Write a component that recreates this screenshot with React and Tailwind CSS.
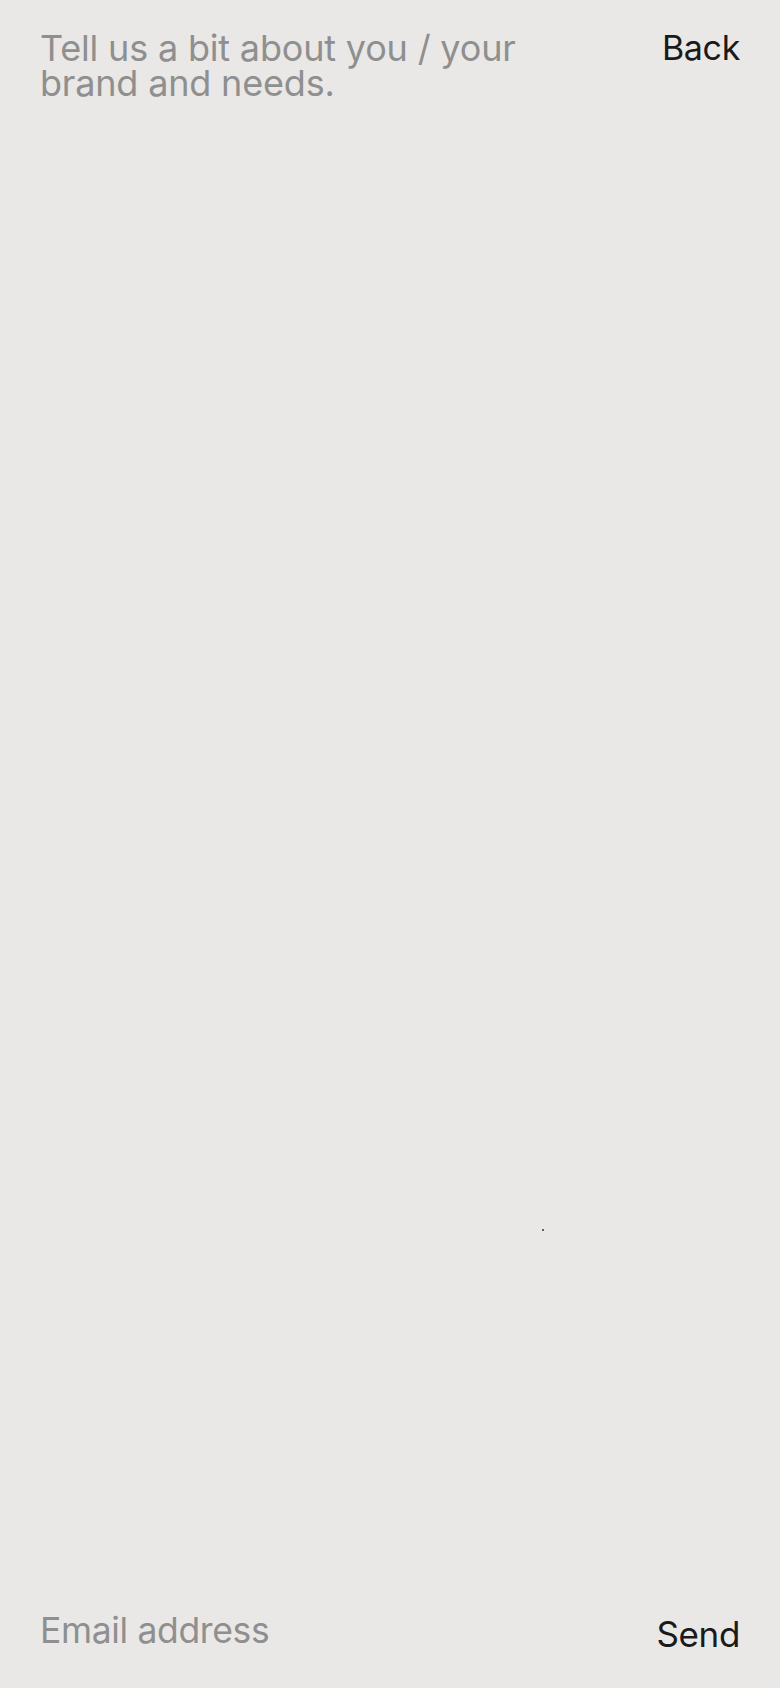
import { useState } from 'react';

export default function App() {
  const [message, setMessage] = useState('');
  const [email, setEmail] = useState('');

  return (
    <div
      className="relative flex min-h-screen h-[1688px] flex-col bg-[#e9e8e6] px-[40px]"
      style={{ fontFamily: 'Inter, "Noto Sans", sans-serif' }}
    >
      {/* message field + back link */}
      <div className="flex flex-1 items-start justify-between pt-[31px]">
        <textarea
          value={message}
          onChange={(e) => setMessage(e.target.value)}
          placeholder="Tell us a bit about you / your brand and needs."
          className="h-full w-[530px] resize-none bg-transparent text-[36px] leading-[35px] tracking-[-0.005em] text-[#1a1a1a] outline-none placeholder:text-[#8f8f8f]"
        />
        <button className="-mt-[1px] text-[34px] leading-[35px] tracking-[-0.01em] text-[#1a1a1a]">Back</button>
      </div>

      {/* email + send */}
      <div className="flex items-start justify-between pb-[34px]">
        <input
          type="email"
          value={email}
          onChange={(e) => setEmail(e.target.value)}
          placeholder="Email address"
          className="w-[420px] bg-transparent text-[35.5px] leading-[40px] tracking-[-0.01em] text-[#1a1a1a] outline-none placeholder:text-[#8f8f8f]"
        />
        <button className="mt-[3px] text-[35px] leading-[40px] tracking-[-0.01em] text-[#1a1a1a]">Send</button>
      </div>

      {/* cursor speck */}
      <span className="absolute left-[542px] top-[1229px] h-[2px] w-[2px] rounded-full bg-[#333]" />
    </div>
  );
}
